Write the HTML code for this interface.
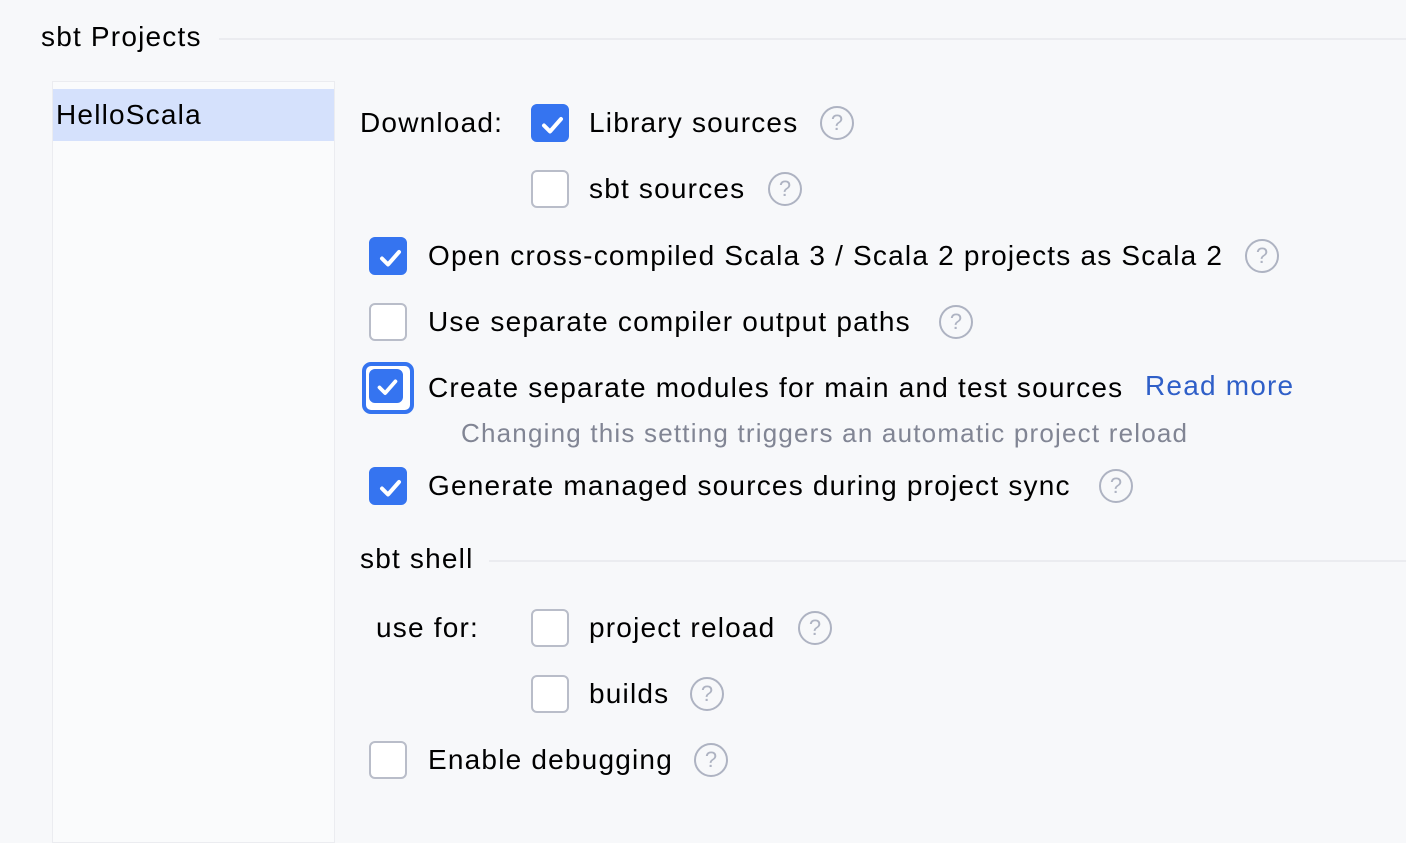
<!DOCTYPE html>
<html><head><style>
body{margin:0;width:1406px;height:829px;background:#f7f8fa;font-family:"Liberation Sans",sans-serif;color:#000;position:relative;overflow:hidden}
.t{position:absolute;font-size:28px;line-height:34px;white-space:nowrap;letter-spacing:1.2px}
.cb{position:absolute;width:34px;height:34px;border:2px solid #b9bdc9;border-radius:6px;background:#fff;box-sizing:content-box}
.cb.on{background:#3574f0;border-color:#3574f0}
.cb.on svg{position:absolute;left:3px;top:3px}
.h{position:absolute;width:30px;height:30px;border:2px solid #aeb3c2;border-radius:50%;color:#aeb3c2;font-size:22px;line-height:30px;text-align:center}
.line{position:absolute;height:2px;background:#ebecf0}
</style></head><body>
<div class="t" style="left:41px;top:20px">sbt Projects</div>
<div class="line" style="left:219px;top:38px;width:1187px"></div>
<div style="position:absolute;left:52px;top:81px;width:281px;height:760px;background:#fafbfc;border:1px solid #ebecf0"></div>
<div style="position:absolute;left:53px;top:89px;width:281px;height:52px;background:#d5e1fc"></div>
<div class="t" style="left:56px;top:98px">HelloScala</div>

<div class="t" style="left:360px;top:106px">Download:</div>

<div class="cb on" style="left:531px;top:104px"><svg width="32" height="32" viewBox="0 0 32 32"><path d="M8 16.5l6 6L25 10" fill="none" stroke="#fff" stroke-width="4" stroke-linecap="round" stroke-linejoin="round"/></svg></div>
<div class="t" style="left:589px;top:106px">Library sources</div>
<div class="h" style="left:820px;top:106px">?</div>

<div class="cb" style="left:531px;top:170px"></div>
<div class="t" style="left:589px;top:172px">sbt sources</div>
<div class="h" style="left:768px;top:172px">?</div>

<div class="cb on" style="left:369px;top:237px"><svg width="32" height="32" viewBox="0 0 32 32"><path d="M8 16.5l6 6L25 10" fill="none" stroke="#fff" stroke-width="4" stroke-linecap="round" stroke-linejoin="round"/></svg></div>
<div class="t" style="left:428px;top:239px">Open cross-compiled Scala 3 / Scala 2 projects as Scala 2</div>
<div class="h" style="left:1245px;top:239px">?</div>

<div class="cb" style="left:369px;top:303px"></div>
<div class="t" style="left:428px;top:305px">Use separate compiler output paths</div>
<div class="h" style="left:939px;top:305px">?</div>

<div style="position:absolute;left:362px;top:362px;width:44px;height:44px;border:4px solid #3574f0;border-radius:9px;background:#fff"></div>
<div class="cb on" style="left:369px;top:369px;width:30px;height:30px"><svg width="30" height="30" viewBox="0 0 32 32" style="left:1px;top:1px"><path d="M8 16.5l6 6L25 10" fill="none" stroke="#fff" stroke-width="4" stroke-linecap="round" stroke-linejoin="round"/></svg></div>
<div class="t" style="left:428px;top:371px">Create separate modules for main and test sources</div>
<div class="t" style="left:1145px;top:369px;color:#2f5fc8">Read more</div>
<div class="t" style="left:461px;top:416px;color:#818594;font-size:26px">Changing this setting triggers an automatic project reload</div>

<div class="cb on" style="left:369px;top:467px"><svg width="32" height="32" viewBox="0 0 32 32"><path d="M8 16.5l6 6L25 10" fill="none" stroke="#fff" stroke-width="4" stroke-linecap="round" stroke-linejoin="round"/></svg></div>
<div class="t" style="left:428px;top:469px">Generate managed sources during project sync</div>
<div class="h" style="left:1099px;top:469px">?</div>

<div class="t" style="left:360px;top:542px">sbt shell</div>
<div class="line" style="left:489px;top:560px;width:917px"></div>

<div class="t" style="left:376px;top:611px">use for:</div>
<div class="cb" style="left:531px;top:609px"></div>
<div class="t" style="left:589px;top:611px">project reload</div>
<div class="h" style="left:798px;top:611px">?</div>

<div class="cb" style="left:531px;top:675px"></div>
<div class="t" style="left:589px;top:677px">builds</div>
<div class="h" style="left:690px;top:677px">?</div>

<div class="cb" style="left:369px;top:741px"></div>
<div class="t" style="left:428px;top:743px">Enable debugging</div>
<div class="h" style="left:694px;top:743px">?</div>
</body></html>
